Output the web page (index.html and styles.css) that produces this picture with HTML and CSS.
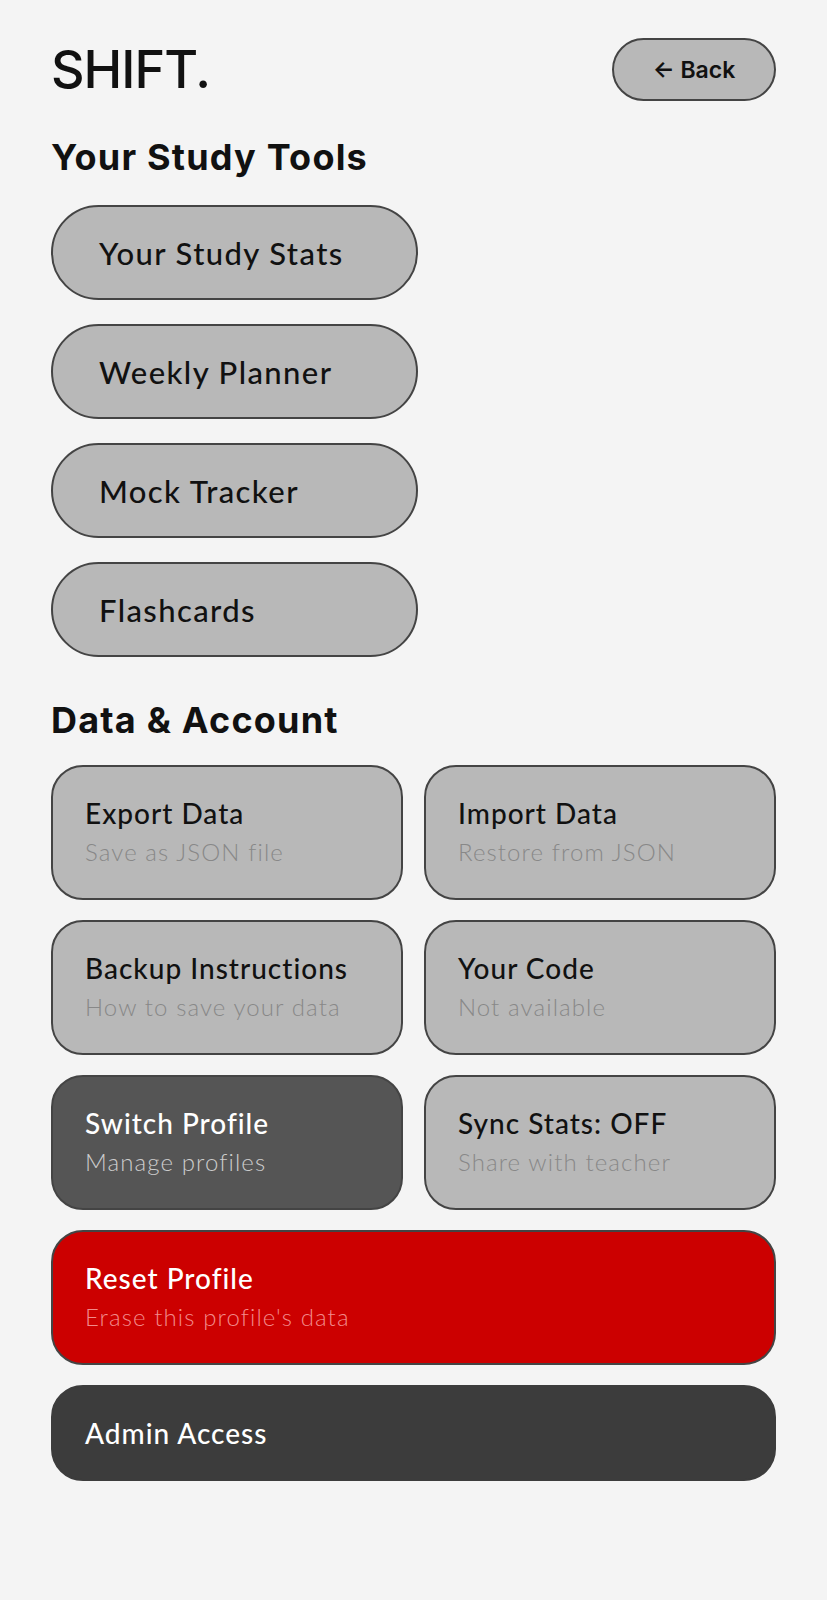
FILE: index.html
```html
<!DOCTYPE html>
<html>
<head>
  <title>SHIFT. - Study Tools</title>
  <link rel="stylesheet" href="styles.css">
</head>
<body>
  <div class="page">
    <header class="top">
      <div class="logo">SHIFT.</div>
      <button class="back-button">&larr; Back</button>
    </header>

    <h2 class="section-title">Your Study Tools</h2>
    <div class="tools">
      <button class="tool">Your Study Stats</button>
      <button class="tool">Weekly Planner</button>
      <button class="tool">Mock Tracker</button>
      <button class="tool">Flashcards</button>
    </div>

    <h2 class="section-title data-title">Data &amp; Account</h2>
    <div class="cards">
      <div class="card">
        <div class="card-title">Export Data</div>
        <div class="card-sub">Save as JSON file</div>
      </div>
      <div class="card">
        <div class="card-title">Import Data</div>
        <div class="card-sub">Restore from JSON</div>
      </div>
      <div class="card">
        <div class="card-title">Backup Instructions</div>
        <div class="card-sub">How to save your data</div>
      </div>
      <div class="card">
        <div class="card-title">Your Code</div>
        <div class="card-sub">Not available</div>
      </div>
      <div class="card card-dark">
        <div class="card-title">Switch Profile</div>
        <div class="card-sub">Manage profiles</div>
      </div>
      <div class="card">
        <div class="card-title">Sync Stats: OFF</div>
        <div class="card-sub">Share with teacher</div>
      </div>
      <div class="card card-wide card-danger">
        <div class="card-title">Reset Profile</div>
        <div class="card-sub">Erase this profile's data</div>
      </div>
      <div class="card card-wide card-admin">
        <div class="card-title">Admin Access</div>
      </div>
    </div>
  </div>
</body>
</html>
```

FILE: styles.css
```css
body {
  margin: 0;
  background-color: #f4f4f4;
  color: #111;
  font-family: Lato, "Open Sans", sans-serif;
}
.page {
  padding: 38px 51px 60px 51px;
}
.top {
  display: flex;
  justify-content: space-between;
  align-items: center;
}
.logo {
  font-family: Inter, "Open Sans", sans-serif;
  font-size: 52px;
  font-weight: 500;
  letter-spacing: -1px;
  color: #111;
}
.back-button {
  width: 164px;
  height: 63px;
  background-color: #b8b8b8;
  border: 2px solid #444;
  border-radius: 32px;
  font-family: Inter, sans-serif;
  font-size: 23px;
  font-weight: 600;
  color: #111;
}
.section-title {
  font-family: Inter, "Open Sans", sans-serif;
  font-size: 36px;
  font-weight: 700;
  letter-spacing: 1.2px;
  margin: 34px 0 26px 0;
  color: #111;
}
.data-title {
  margin-top: 41px;
  margin-bottom: 23px;
}
.tools {
  display: flex;
  flex-direction: column;
  align-items: flex-start;
  gap: 24px;
}
.tool {
  width: 367px;
  height: 95px;
  background-color: #b8b8b8;
  border: 2px solid #444;
  border-radius: 48px;
  text-align: left;
  padding: 0 0 0 46px;
  font-family: Lato, sans-serif;
  font-size: 31px;
  font-weight: 500;
  letter-spacing: 1.4px;
  color: #111;
}
.cards {
  display: grid;
  grid-template-columns: 1fr 1fr;
  column-gap: 21px;
  row-gap: 20px;
}
.card {
  height: 135px;
  box-sizing: border-box;
  background-color: #b8b8b8;
  border: 2px solid #444;
  border-radius: 32px;
  padding: 29px 32px;
}
.card-title {
  font-size: 28px;
  font-weight: 500;
  letter-spacing: 1px;
  color: #111;
}
.card-sub {
  margin-top: 7px;
  font-size: 24px;
  font-weight: 300;
  letter-spacing: 1.1px;
  color: #888;
}
.card-wide {
  grid-column: span 2;
}
.card-dark {
  background-color: #555;
}
.card-dark .card-title {
  color: #fff;
}
.card-dark .card-sub {
  color: #ccc;
}
.card-danger {
  background-color: #cc0000;
}
.card-danger .card-title {
  color: #fff;
}
.card-danger .card-sub {
  color: #f28a8a;
}
.card-admin {
  height: 96px;
  background-color: #3c3c3c;
  border-color: #3c3c3c;
  display: flex;
  align-items: center;
  padding-top: 0;
  padding-bottom: 0;
}
.card-admin .card-title {
  color: #fff;
}
```
